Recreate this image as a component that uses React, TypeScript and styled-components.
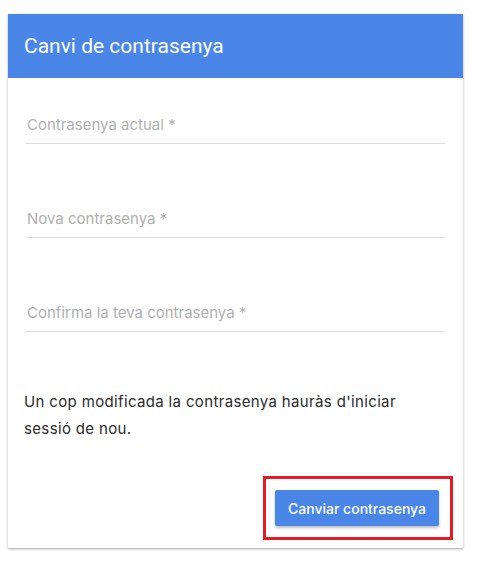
import styled, { createGlobalStyle } from 'styled-components';

const Global = createGlobalStyle`
    body {
        margin: 0;
        padding: 14px 8px;
        background: #ffffff;
        font-family: Inter, 'Noto Sans', sans-serif;
    }
`

const Card = styled.div`
    width: 455px;
    background: #ffffff;
    box-shadow: 0 1px 3px rgba(0, 0, 0, 0.25), 0 1px 1px rgba(0, 0, 0, 0.1);
    display: flex;
    flex-direction: column;
`
const Header = styled.div`
    height: 64px;
    background-color: #4a86e8;
    display: flex;
    align-items: center;
    padding: 0 16px;
    color: #ffffff;
    font-family: Roboto, sans-serif;
    font-size: 21px;
    font-weight: 400;
`
const Body = styled.div`
    display: flex;
    flex-direction: column;
    padding: 37px 18px 0 18px;
    gap: 65px;
`
const Field = styled.label`
    display: block;
    padding: 0 0 8px 1px;
    line-height: 20px;
    font-size: 15px;
    color: #b0b0b0;
    border-bottom: 1px solid #dcdcdc;
`
const Note = styled.p`
    margin: 56px 0 0 0;
    padding: 0 16px;
    font-size: 15px;
    line-height: 27px;
    letter-spacing: 0.35px;
    color: #2b2b2b;
`
const Footer = styled.div`
    display: flex;
    justify-content: flex-end;
    padding: 34px 10px 8px 0;
`
const Highlight = styled.div`
    border: 3px solid #e51b24;
    padding: 11px 11px 11px 9px;
    display: flex;
`
const Button = styled.button`
    width: 164px;
    height: 36px;
    border: none;
    border-radius: 2px;
    background-color: #4a86e8;
    color: #ffffff;
    font-family: Inter, sans-serif;
    font-size: 14px;
    font-weight: 500;
    box-shadow: 0 2px 3px rgba(0, 0, 0, 0.25);
    cursor: pointer;
`

export default function App() {
    return (
        <>
            <Global />
            <Card>
                <Header>Canvi de contrasenya</Header>
                <Body>
                    <Field>Contrasenya actual *</Field>
                    <Field>Nova contrasenya *</Field>
                    <Field>Confirma la teva contrasenya *</Field>
                </Body>
                <Note>Un cop modificada la contrasenya hauràs d'iniciar sessió de nou.</Note>
                <Footer>
                    <Highlight>
                        <Button>Canviar contrasenya</Button>
                    </Highlight>
                </Footer>
            </Card>
        </>
    );
}
